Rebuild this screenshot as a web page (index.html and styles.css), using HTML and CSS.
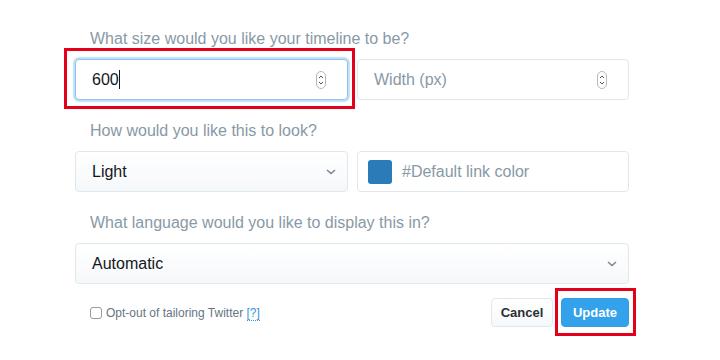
FILE: index.html
```html
<!DOCTYPE html>
<html lang="en">
<head>
    <meta charset="UTF-8">
    <meta name="viewport" content="width=device-width, initial-scale=1.0">
    <title>Customize timeline</title>
    <link rel="stylesheet" href="styles.css">
</head>
<body>
    <div class="container">
        <div class="group">
            <p class="label">What size would you like your timeline to be?</p>
            <div class="row">
                <div class="field focused">
                    <span class="value">600</span><span class="caret"></span>
                    <svg class="spinner" width="10" height="18" viewBox="0 0 10 18">
                        <rect x="0.5" y="0.5" width="9" height="17" rx="4.5" fill="#fff" stroke="#b8b8b8"/>
                        <polyline points="3,7 5,5 7,7" fill="none" stroke="#555" stroke-width="1"/>
                        <polyline points="3,11 5,13 7,11" fill="none" stroke="#555" stroke-width="1"/>
                    </svg>
                    <span class="highlight big"></span>
                </div>
                <div class="field">
                    <span class="placeholder">Width (px)</span>
                    <svg class="spinner" width="10" height="18" viewBox="0 0 10 18">
                        <rect x="0.5" y="0.5" width="9" height="17" rx="4.5" fill="#fff" stroke="#b8b8b8"/>
                        <polyline points="3,7 5,5 7,7" fill="none" stroke="#555" stroke-width="1"/>
                        <polyline points="3,11 5,13 7,11" fill="none" stroke="#555" stroke-width="1"/>
                    </svg>
                </div>
            </div>
        </div>

        <div class="group">
            <p class="label">How would you like this to look?</p>
            <div class="row">
                <div class="field select">
                    <span class="value">Light</span>
                    <svg class="chevron" width="12" height="8" viewBox="0 0 12 8">
                        <polyline points="2,2 6,5.5 10,2" fill="none" stroke="#7a8791" stroke-width="1.6"/>
                    </svg>
                </div>
                <div class="field color">
                    <span class="swatch"></span>
                    <span class="placeholder">#Default link color</span>
                </div>
            </div>
        </div>

        <div class="group">
            <p class="label">What language would you like to display this in?</p>
            <div class="field select">
                <span class="value">Automatic</span>
                <svg class="chevron" width="12" height="8" viewBox="0 0 12 8">
                    <polyline points="2,2 6,5.5 10,2" fill="none" stroke="#7a8791" stroke-width="1.6"/>
                </svg>
            </div>
        </div>

        <div class="footer">
            <label class="optout">
                <input type="checkbox">
                <span>Opt-out of tailoring Twitter <a href="#">[?]</a></span>
            </label>
            <div class="actions">
                <button class="btn cancel">Cancel</button>
                <div class="marked">
                    <button class="btn update">Update</button>
                    <span class="highlight small"></span>
                </div>
            </div>
        </div>
    </div>
</body>
</html>
```

FILE: styles.css
```css
* {
    box-sizing: border-box;
    margin: 0;
    padding: 0;
}

html, body {
    min-height: 100%;
}

body {
    font-family: "Liberation Sans", Arial, sans-serif;
    color: #14171a;
    background-color: #fff;
}

.container {
    width: 554px;
    margin-left: 75px;
    padding: 29px 0 24px;
}

.group {
    margin-bottom: 21px;
}

.label {
    font-size: 16px;
    line-height: 20px;
    color: #8899a6;
    padding-left: 15px;
    margin-bottom: 10px;
}

.row {
    display: grid;
    grid-template-columns: 273px 272px;
    gap: 9px;
}

.field {
    position: relative;
    display: flex;
    align-items: center;
    height: 41px;
    padding: 0 15px 0 16px;
    border: 1px solid #e1e8ed;
    border-radius: 4px;
    background-color: #fff;
    font-size: 16px;
}

.field.focused {
    border-color: #8fc3ee;
    box-shadow: 0 0 1px 2px #c4e0f7;
}

.value {
    color: #14171a;
}

.caret {
    display: inline-block;
    width: 1px;
    height: 19px;
    background-color: #14171a;
}

.placeholder {
    color: #8899a6;
}

.spinner {
    margin-left: auto;
    margin-right: 6px;
}

.select {
    padding-right: 10px;
    background: linear-gradient(#fff, #f5f8fa);
}

.chevron {
    margin-left: auto;
}

.color {
    padding-left: 10px;
}

.swatch {
    width: 24px;
    height: 24px;
    border-radius: 3px;
    background-color: #2b7bb9;
    margin-right: 10px;
}

.footer {
    display: flex;
    justify-content: space-between;
    align-items: center;
    margin-top: -7px;
}

.optout {
    display: flex;
    align-items: center;
    padding-left: 15px;
    font-size: 12px;
    color: #66757f;
}

.optout input {
    appearance: none;
    width: 12px;
    height: 12px;
    border: 1px solid #9a9a9a;
    border-radius: 3px;
    background-color: #fff;
    margin-right: 4px;
}

.optout a {
    color: #3b94d9;
    text-decoration: none;
    border-bottom: 1px dotted #3b94d9;
}

.actions {
    display: flex;
    gap: 8px;
}

.marked {
    position: relative;
    display: flex;
}

.btn {
    height: 29px;
    border-radius: 4px;
    font-family: "Liberation Sans", Arial, sans-serif;
    font-size: 13px;
    font-weight: bold;
    cursor: pointer;
}

.cancel {
    width: 62px;
    color: #292f33;
    border: 1px solid #e1e8ed;
    background: linear-gradient(#fff, #f5f8fa);
}

.update {
    width: 68px;
    color: #fff;
    border: 1px solid #2f9fe8;
    background-color: #33a2ea;
}

.highlight {
    position: absolute;
    border: 3px solid #e2001a;
    pointer-events: none;
}

.highlight.big {
    top: -12px;
    left: -12px;
    right: -8px;
    bottom: -10px;
}

.highlight.small {
    top: -10px;
    left: -6px;
    right: -7px;
    bottom: -9px;
}
```
